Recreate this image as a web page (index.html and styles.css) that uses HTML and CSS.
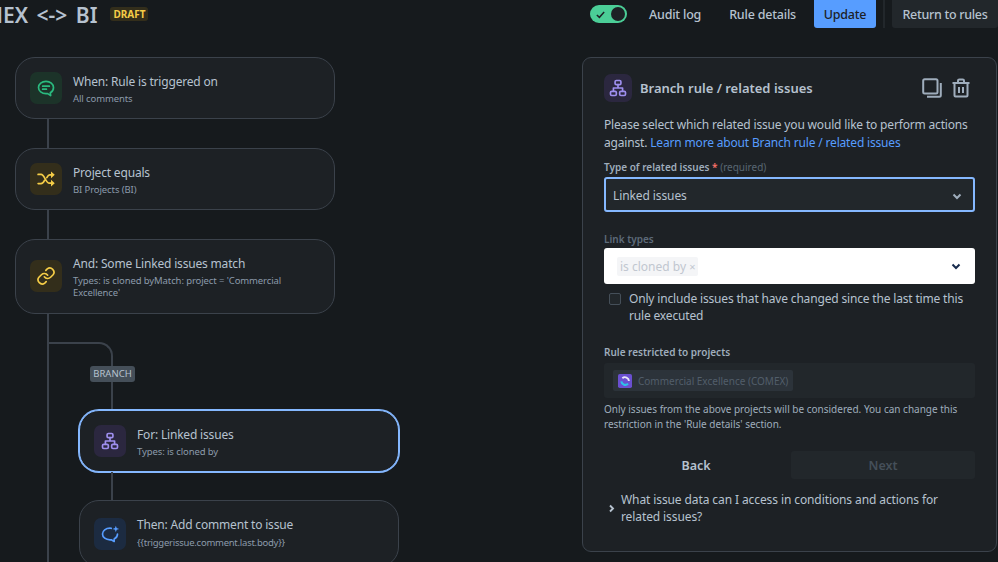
FILE: index.html
```html
<!DOCTYPE html>
<html lang="en">
<head>
    <meta charset="UTF-8">
    <meta name="viewport" content="width=device-width, initial-scale=1.0">
    <title>COMEX &lt;-&gt; BI</title>
    <link rel="stylesheet" href="styles.css">
</head>
<body>
    <header class="top-bar">
        <h1 class="rule-name">COMEX &lt;-&gt; BI</h1>
        <span class="draft-badge">DRAFT</span>
        <div class="top-actions">
            <span class="toggle">
                <svg class="toggle-check" viewBox="0 0 12 12"><path d="M2 6.500l2.800 2.600L10 3.400"/></svg>
                <span class="toggle-knob"></span>
            </span>
            <button class="top-btn">Audit log</button>
            <button class="top-btn">Rule details</button>
            <button class="top-btn update-btn">Update</button>
            <span class="top-divider"></span>
            <button class="top-btn return-btn">Return to rules</button>
        </div>
    </header>

    <main class="workspace">
        <section class="flow">
            <div class="card">
                <span class="tile tile-green">
                    <svg viewBox="0 0 24 24"><path d="M12 4C7 4 3 7 3 11.300s4 7.400 9 7.400h2l3.600 2.300-.4-3.300c2.300-1.300 3.800-3.600 3.800-6.400C21 7 17 4 12 4z"/><path d="M8 9.800h8M8 13.400h4.500"/></svg>
                </span>
                <div class="card-text">
                    <div class="card-title">When: Rule is triggered on</div>
                    <div class="card-sub">All comments</div>
                </div>
            </div>
            <div class="stem"></div>
            <div class="card">
                <span class="tile tile-yellow">
                    <svg viewBox="0 0 24 24"><path d="M2.500 6.500h3.500c4.500 0 5.500 10.500 10 10.500h3M2.500 17.500h3.500c2 0 3.200-1.800 4.200-3.900M13 10.400C14 8.500 15 7 16.500 7H19"/><path class="solid" d="M18 3l4.500 4-4.500 4zM18 13l4.500 4-4.500 4z"/></svg>
                </span>
                <div class="card-text">
                    <div class="card-title">Project equals</div>
                    <div class="card-sub">BI Projects (BI)</div>
                </div>
            </div>
            <div class="stem"></div>
            <div class="card">
                <span class="tile tile-yellow">
                    <svg viewBox="0 0 24 24"><path d="M10 13a5 5 0 0 0 7.500.5l3-3a5 5 0 0 0-7-7L11.800 5.200"/><path d="M14 11a5 5 0 0 0-7.500-.5l-3 3a5 5 0 0 0 7 7l1.700-1.700"/></svg>
                </span>
                <div class="card-text">
                    <div class="card-title">And: Some Linked issues match</div>
                    <div class="card-sub">Types: is cloned byMatch: project = 'Commercial Excellence'</div>
                </div>
            </div>

            <div class="branch">
                <div class="elbow"></div>
                <span class="branch-badge">BRANCH</span>
                <div class="branch-steps">
                    <div class="stem stem-short"></div>
                    <div class="card card-active">
                        <span class="tile tile-purple">
                            <svg viewBox="0 0 24 24"><rect x="8.500" y="3" width="7" height="5" rx="1.500"/><rect x="3" y="16" width="7" height="5" rx="1.500"/><rect x="14" y="16" width="7" height="5" rx="1.500"/><path d="M12 8v4M6.500 16v-4h11v4"/></svg>
                        </span>
                        <div class="card-text">
                            <div class="card-title">For: Linked issues</div>
                            <div class="card-sub">Types: is cloned by</div>
                        </div>
                    </div>
                    <div class="stem stem-short"></div>
                    <div class="card card-tall">
                        <span class="tile tile-blue">
                            <svg viewBox="0 0 24 24"><path d="M13.500 5.200C12.900 5.100 12.500 5 12 5c-5 0-9 2.900-9 7s4 7 9 7h1.500l3.500 2v-3c2.500-1.200 4-3.400 4-6"/><path class="solid" d="M19 2l1 2.900 3 1-3 1-1 3-1-3-3-1 3-1z"/></svg>
                        </span>
                        <div class="card-text">
                            <div class="card-title">Then: Add comment to issue</div>
                            <div class="card-sub card-sub-code">{{triggerissue.comment.last.body}}</div>
                        </div>
                    </div>
                </div>
            </div>
        </section>

        <aside class="panel">
            <div class="panel-head">
                <span class="tile tile-purple tile-small">
                    <svg viewBox="0 0 24 24"><rect x="8.500" y="3" width="7" height="5" rx="1.500"/><rect x="3" y="16" width="7" height="5" rx="1.500"/><rect x="14" y="16" width="7" height="5" rx="1.500"/><path d="M12 8v4M6.500 16v-4h11v4"/></svg>
                </span>
                <h2 class="panel-title">Branch rule / related issues</h2>
                <svg class="panel-icon copy-icon" viewBox="0 0 20 20"><rect x="1.200" y="1.200" width="14.300" height="14.300" rx="1.500"/><path d="M18.800 5v12.300a1.500 1.500 0 0 1-1.500 1.500H5"/></svg>
                <svg class="panel-icon" viewBox="0 0 20 20"><path d="M1.500 5h17M7 5V2.800C7 2 7.600 1.500 8.300 1.500h3.400c.7 0 1.300.5 1.300 1.300V5M3.500 5v12.500c0 .6.500 1 1 1h11c.5 0 1-.4 1-1V5"/><path d="M8 9v6M12 9v6"/></svg>
            </div>

            <p class="panel-desc">Please select which related issue you would like to perform actions against. <a class="panel-link" href="#">Learn more about Branch rule / related issues</a></p>

            <label class="field-label label-first">Type of related issues<span class="required-star"> *</span> <span class="required-note">(required)</span></label>
            <div class="select select-focus">
                <span>Linked issues</span>
                <svg class="chevron" viewBox="0 0 12 12"><path d="M2.500 4.500L6 8l3.500-3.500"/></svg>
            </div>

            <label class="field-label label-dim">Link types</label>
            <div class="select select-light">
                <span class="tag-light">is cloned by <span class="tag-x">×</span></span>
                <svg class="chevron chevron-dark" viewBox="0 0 12 12"><path d="M2.500 4.500L6 8l3.500-3.500"/></svg>
            </div>

            <div class="check-row">
                <span class="checkbox"></span>
                <span>Only include issues that have changed since the last time this rule executed</span>
            </div>

            <label class="field-label label-projects">Rule restricted to projects</label>
            <div class="project-field">
                <span class="project-tag">
                    <svg class="project-icon" viewBox="0 0 16 16">
                        <rect width="16" height="16" rx="2" fill="#6a4fd0"/>
                        <path d="M5 4.800A4.500 4.500 0 0 1 12.500 8" fill="none" stroke="#e8e6f8" stroke-width="2.200"/>
                        <path d="M11.500 11A4.500 4.500 0 0 1 3.800 8.500" fill="none" stroke="#2cc4e8" stroke-width="2.400"/>
                    </svg>
                    Commercial Excellence (COMEX)
                </span>
            </div>
            <p class="help-text">Only issues from the above projects will be considered. You can change this restriction in the 'Rule details' section.</p>

            <div class="panel-buttons">
                <button class="panel-btn">Back</button>
                <button class="panel-btn panel-btn-off">Next</button>
            </div>

            <div class="expander">
                <svg class="expander-arrow" viewBox="0 0 12 12"><path d="M4 2l4 4-4 4"/></svg>
                <span>What issue data can I access in conditions and actions for related issues?</span>
            </div>
        </aside>
    </main>
</body>
</html>
```

FILE: styles.css
```css
* {
    margin: 0;
    padding: 0;
    box-sizing: border-box;
    font-family: 'Noto Sans', 'Open Sans', sans-serif;
}

body {
    width: 998px;
    height: 562px;
    overflow: hidden;
    background-color: #161a1d;
    color: #b6c2cf;
}

/* top bar */
.top-bar {
    display: flex;
    align-items: flex-start;
    height: 57px;
}

.rule-name {
    margin-left: -46px;
    margin-top: 1px;
    font-size: 21px;
    line-height: 28px;
    font-weight: 600;
    word-spacing: 3px;
    white-space: nowrap;
    color: #b6c2cf;
}

.draft-badge {
    margin-left: 13px;
    margin-top: 7px;
    padding: 0 3px;
    height: 14px;
    line-height: 14px;
    font-size: 10px;
    font-weight: 700;
    color: #f5cd47;
    background-color: #332e1b;
    border-radius: 3px;
}

.top-actions {
    display: flex;
    align-items: flex-start;
    gap: 8px;
    margin-left: auto;
}

.toggle {
    display: flex;
    align-items: center;
    justify-content: space-between;
    width: 37px;
    height: 18px;
    margin-top: 5px;
    margin-right: 4px;
    padding: 0 2px 0 5px;
    background-color: #4bce97;
    border-radius: 9px;
}

.toggle-check {
    width: 11px;
    height: 11px;
    fill: none;
    stroke: #1d2125;
    stroke-width: 1.6;
}

.toggle-knob {
    width: 14px;
    height: 14px;
    background-color: #1d2125;
    border-radius: 50%;
}

.top-btn {
    height: 28px;
    padding: 0 10px;
    border: none;
    background: none;
    color: #b6c2cf;
    font-size: 12.5px;
    font-weight: 500;
    letter-spacing: -0.2px;
    border-radius: 0 0 3px 3px;
}

.update-btn {
    width: 62px;
    padding: 0;
    background-color: #579dff;
    color: #1d2125;
}

.top-divider {
    width: 2px;
    height: 28px;
    margin: 0 -1px;
    background-color: #22272b;
}

.return-btn {
    width: 106px;
    padding: 0;
    letter-spacing: -0.3px;
    background-color: #22272b;
}

/* rule flow */
.workspace {
    display: flex;
    align-items: flex-start;
}

.flow {
    flex: 0 0 582px;
    padding-left: 15px;
}

.card {
    display: flex;
    align-items: center;
    gap: 11px;
    width: 320px;
    padding: 14px;
    background-color: #1d2125;
    border: 1px solid #3b424b;
    border-radius: 20px;
}

.card-active {
    border-color: #85b8ff;
    box-shadow: 0 0 0 1px #85b8ff;
}

.card-tall {
    padding: 16px 14px;
}

.card-text {
    transform: translateY(1px);
}

.card-tall .card-text {
    transform: translateY(-1px);
}

.tile {
    flex: none;
    display: flex;
    align-items: center;
    justify-content: center;
    width: 32px;
    height: 32px;
    border-radius: 7px;
}

.tile svg {
    width: 20px;
    height: 20px;
    fill: none;
    stroke: currentColor;
    stroke-width: 2;
    stroke-linecap: round;
    stroke-linejoin: round;
}

.tile svg .solid {
    fill: currentColor;
    stroke: none;
}

.tile-small {
    width: 28px;
    height: 28px;
}

.tile-green {
    color: #2abb7f;
    background-color: #1c3329;
}

.tile-yellow {
    color: #f5cd47;
    background-color: #332e1b;
}

.tile-purple {
    color: #9f8fef;
    background-color: #2b273f;
}

.tile-blue {
    color: #579dff;
    background-color: #1c2b41;
}

.card-title {
    font-size: 12px;
    line-height: 18px;
    letter-spacing: -0.18px;
}

.card-sub {
    margin-top: 1.5px;
    font-size: 9.5px;
    line-height: 12.5px;
    letter-spacing: -0.1px;
    color: #8c9bab;
}

.card-sub-code {
    margin-top: 2.5px;
    letter-spacing: -0.25px;
}

.stem {
    width: 2px;
    height: 29px;
    margin-left: 32px;
    background-color: #3b424b;
}

.stem-short {
    height: 28px;
}

.branch {
    margin-left: 32px;
    border-left: 2px solid #3b424b;
    padding-top: 28.5px;
    height: 260px;
}

.elbow {
    width: 64px;
    height: 24px;
    border-top: 2px solid #3b424b;
    border-right: 2px solid #3b424b;
    border-top-right-radius: 14px;
}

.branch-badge {
    display: block;
    width: 45px;
    height: 16px;
    margin-left: 41px;
    line-height: 16px;
    text-align: center;
    font-size: 9.5px;
    color: #b6c2cf;
    background-color: #454f59;
    border-radius: 3px;
}

.branch-steps {
    margin-left: 30px;
}

/* details panel */
.panel {
    width: 415px;
    height: 495px;
    padding: 16px 21px;
    background-color: #1d2125;
    border: 1px solid #3b424b;
    border-radius: 9px;
}

.panel-head {
    display: flex;
    align-items: center;
}

.panel-title {
    margin-left: 8px;
    font-size: 13px;
    font-weight: 600;
    flex: 1;
}

.panel-icon {
    width: 20px;
    height: 20px;
    margin-right: 4px;
    fill: none;
    stroke: #9fadbc;
    stroke-width: 2;
}

.copy-icon {
    margin-right: 9px;
}

.panel-desc {
    margin-top: 14px;
    font-size: 12px;
    line-height: 18px;
    letter-spacing: -0.17px;
}

.panel-link {
    color: #579dff;
    text-decoration: none;
}

.field-label {
    display: block;
    font-size: 10px;
    line-height: 14px;
    font-weight: 600;
    color: #9fadbc;
}

.label-first {
    margin-top: 8px;
    margin-bottom: 3px;
}

.label-dim {
    margin-top: 20px;
    margin-bottom: 2px;
    color: #5d6b7a;
}

.label-projects {
    margin-top: 21px;
    margin-bottom: 4px;
}

.required-star {
    color: #f87168;
}

.required-note {
    font-weight: 400;
    color: #596773;
}

.select {
    display: flex;
    align-items: center;
    justify-content: space-between;
    height: 35px;
    padding: 0 13px 0 7px;
    font-size: 12px;
    letter-spacing: -0.1px;
    border-radius: 3px;
}

.select-focus {
    padding-top: 2px;
    padding-right: 10px;
    background-color: #22272b;
    border: 2px solid #85b8ff;
}

.select-light {
    height: 36px;
    padding-left: 13px;
    background-color: #fff;
}

.tag-light {
    padding: 0 3px;
    height: 19px;
    line-height: 19px;
    font-size: 12px;
    letter-spacing: 0;
    color: #c1c7d0;
    background-color: #f4f5f7;
    border-radius: 2px;
}

.tag-x {
    font-size: 11px;
}

.chevron {
    width: 12px;
    height: 12px;
    fill: none;
    stroke: #9fadbc;
    stroke-width: 2;
}

.chevron-dark {
    stroke: #172b4d;
}

.check-row {
    display: flex;
    gap: 8px;
    margin-top: 6px;
    padding-left: 5px;
    font-size: 12px;
    line-height: 17px;
    letter-spacing: -0.17px;
}

.checkbox {
    flex: none;
    width: 12px;
    height: 12px;
    margin-top: 3px;
    background-color: #22272b;
    border: 1px solid #454f59;
    border-radius: 2px;
}

.project-field {
    display: flex;
    align-items: center;
    height: 35px;
    padding-left: 9px;
    background-color: #22272b;
    border-radius: 3px;
}

.project-tag {
    display: flex;
    align-items: center;
    gap: 6px;
    height: 21px;
    padding: 0 5px;
    font-size: 10px;
    color: #525e6a;
    background-color: #2c333a;
    border-radius: 2px;
}

.project-icon {
    width: 14px;
    height: 14px;
}

.help-text {
    margin-top: 4px;
    font-size: 10px;
    line-height: 15px;
    color: #9fadbc;
}

.panel-buttons {
    display: grid;
    grid-template-columns: 1fr 1fr;
    gap: 3px;
    margin-top: 19px;
}

.panel-btn {
    height: 28px;
    border: none;
    background: none;
    color: #b6c2cf;
    font-size: 12.5px;
    font-weight: 600;
    border-radius: 3px;
}

.panel-btn-off {
    background-color: #22272b;
    color: #454f59;
}

.expander {
    display: flex;
    align-items: center;
    gap: 5px;
    margin-top: 12px;
    padding-left: 3px;
    font-size: 12px;
    line-height: 17px;
    letter-spacing: -0.1px;
}

.expander-arrow {
    flex: none;
    width: 9px;
    height: 9px;
    fill: none;
    stroke: #b6c2cf;
    stroke-width: 2.5;
}
```
